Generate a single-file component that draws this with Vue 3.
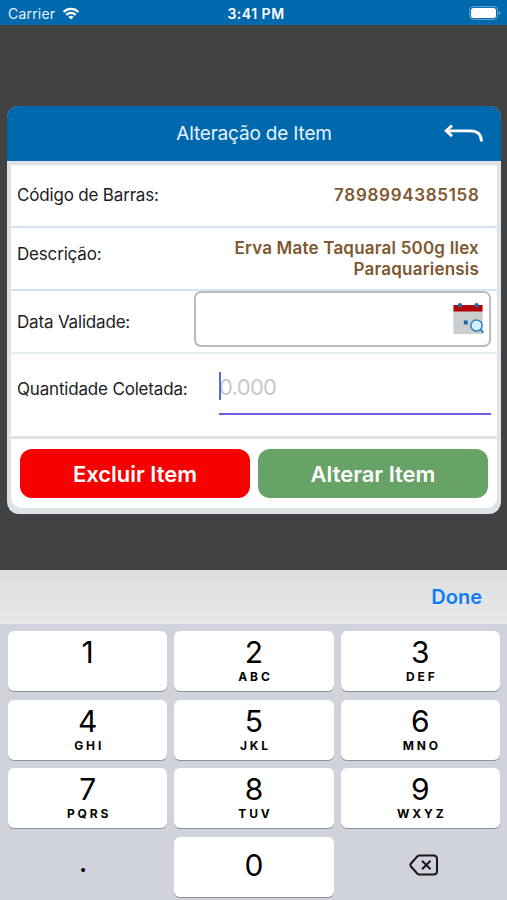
<template>
  <div class="screen">
    <div class="status_bar">
      <div class="status_left">
        <span class="carrier">Carrier</span>
        <svg class="wifi" viewBox="0 0 18 13" width="18" height="13">
          <path d="M1.6 5A10.4 10.4 0 0 1 16.400 5" />
          <path d="M4.300 7.900A6.600 6.600 0 0 1 13.700 7.900" />
          <path class="wifi_dot" d="M9 12.600L6.400 10.100A3.700 3.700 0 0 1 11.600 10.100Z" />
        </svg>
      </div>
      <span class="clock">3:41 PM</span>
      <div class="status_right">
        <svg viewBox="0 0 32 14" width="32" height="14">
          <rect class="battery_border" x="0.600" y="0.600" width="28" height="12.800" rx="4" />
          <rect class="battery_fill" x="2" y="2.100" width="25" height="9.800" rx="2.500" />
          <path class="battery_tip" d="M30 5v4q1.600-.6 1.600-2T30 5z" />
        </svg>
      </div>
    </div>

    <div class="dialog">
      <div class="dialog_header">
        <span class="dialog_title">Alteração de Item</span>
        <svg class="back" viewBox="0 0 40 20" width="40" height="20" @click="back()">
          <path d="M8 1.500L2.200 6.800L8 12.100M2.500 6.800H26Q37.500 6.800 37.500 17.500" />
        </svg>
      </div>
      <div class="dialog_body">
        <div class="row row_code">
          <span class="label">Código de Barras:</span>
          <span class="value code">{{ item.code }}</span>
        </div>
        <div class="row row_desc">
          <span class="label">Descrição:</span>
          <span class="value desc">{{ item.description }}</span>
        </div>
        <div class="row row_date">
          <span class="label">Data Validade:</span>
          <div class="date_field">
            <input v-model="date" class="date_input" type="text" />
            <svg viewBox="0 0 32 33" width="32" height="33">
              <rect x="0.500" y="3" width="29" height="29" fill="#cbcdcf" />
              <rect x="0.500" y="3" width="29" height="6.500" fill="#b4050b" />
              <circle cx="7" cy="3.300" r="2.200" fill="#1c68a8" />
              <circle cx="23.500" cy="3.300" r="2.200" fill="#1c68a8" />
              <rect x="10.800" y="18.500" width="4" height="4" fill="#1c68a8" />
              <path d="M27.500 27.500L30.500 30.800" stroke="#2d84bc" stroke-width="2" />
              <circle cx="23.500" cy="23.500" r="5.600" fill="#d6efff" stroke="#2d84bc" stroke-width="1.500" />
            </svg>
          </div>
        </div>
        <div class="row row_amount">
          <span class="label">Quantidade Coletada:</span>
          <div class="amount_field">
            <input v-model="amount" class="amount_input" type="text" placeholder="0.000" />
            <i class="caret"></i>
          </div>
        </div>
      </div>
      <div class="dialog_footer">
        <button class="btn btn_delete">Excluir Item</button>
        <button class="btn btn_save">Alterar Item</button>
      </div>
    </div>

    <div class="keyboard">
      <div class="toolbar">
        <span class="done">Done</span>
      </div>
      <div class="keys">
        <div
          v-for="key in keys"
          :key="key.num"
          class="key"
          :class="{ plain: key.plain, single: key.single }"
          @click="press(key)"
        >
          <svg v-if="key.num === 'del'" class="del" viewBox="0 0 30 22" width="30" height="22">
            <path d="M10.500 1.500H24.500Q28 1.500 28 5V17Q28 20.500 24.500 20.500H10.500Q9.200 20.500 8.200 19.500L2 12.500Q.7 11 2 9.500L8.200 2.500Q9.200 1.500 10.500 1.500Z" />
            <path d="M13 6.700L21.500 15.300M21.500 6.700L13 15.300" />
          </svg>
          <template v-else>
            <span class="num">{{ key.num }}</span>
            <span v-if="key.letters" class="letters">{{ key.letters }}</span>
          </template>
        </div>
      </div>
    </div>
  </div>
</template>

<script setup>
import {ref} from "vue";

const emit = defineEmits(["back"]);

const item = {
  code: "7898994385158",
  description: "Erva Mate Taquaral 500g Ilex Paraquariensis"
}
const date = ref("")
const amount = ref("")

const keys = [
  {num: "1"},
  {num: "2", letters: "ABC"},
  {num: "3", letters: "DEF"},
  {num: "4", letters: "GHI"},
  {num: "5", letters: "JKL"},
  {num: "6", letters: "MNO"},
  {num: "7", letters: "PQRS"},
  {num: "8", letters: "TUV"},
  {num: "9", letters: "WXYZ"},
  {num: ".", plain: true},
  {num: "0", single: true},
  {num: "del", plain: true}
]

function press(key) {
  if (key.num === "del") {
    amount.value = amount.value.slice(0, -1)
  } else {
    amount.value += key.num
  }
}

function back() {
  emit("back")
}
</script>

<style>
body {
  margin: 0;
  background: #424242;
}
</style>

<style scoped>
.screen {
  display: flex;
  flex-direction: column;
  width: 507px;
  height: 900px;
  overflow: hidden;
  background: #424242;
  font-family: Inter, "Liberation Sans", sans-serif;
}

.status_bar {
  display: grid;
  grid-template-columns: 1fr auto 1fr;
  align-items: center;
  box-sizing: border-box;
  height: 25px;
  padding: 2px 6px 0 8px;
  background: #0069ae;
  color: #fff;
  font-size: 14px;
}

.status_left {
  display: flex;
  align-items: center;
  gap: 7px;
}

.carrier {
  color: #e3f1fb;
  letter-spacing: 0.2px;
}

.wifi {
  fill: none;
  stroke: #fff;
  stroke-width: 2.2;
}

.wifi .wifi_dot {
  fill: #fff;
  stroke: none;
}

.clock {
  margin-left: 3px;
  font-weight: 600;
  letter-spacing: 0.5px;
}

.status_right {
  display: flex;
  justify-content: flex-end;
}

.status_right svg {
  margin-top: -1px;
}

.battery_border {
  fill: none;
  stroke: #6ba8d2;
  stroke-width: 1;
}

.battery_fill {
  fill: #fff;
}

.battery_tip {
  fill: #6ba8d2;
}

.dialog {
  width: 494px;
  height: 408px;
  margin: 81px 0 0 7px;
  border-radius: 12px;
  overflow: hidden;
  background: #dfe2e6;
}

.dialog_header {
  display: grid;
  grid-template-columns: 1fr auto 1fr;
  align-items: center;
  height: 55px;
  background: #0069ae;
}

.dialog_title {
  grid-column: 2;
  color: #e6f3fc;
  font-size: 19px;
  letter-spacing: -0.18px;
}

.back {
  justify-self: end;
  margin: 0 17px 0 0;
  fill: none;
  stroke: #fff;
  stroke-width: 2.8;
}

.dialog_body {
  margin: 4px 4px 0;
  background: #fff;
}

.row {
  display: flex;
  align-items: center;
  justify-content: space-between;
  box-sizing: border-box;
  padding: 0 18px 0 6px;
  border-bottom: 2px solid #d2e5f0;
}

.row_code {
  height: 63px;
}

.row_desc {
  height: 63px;
}

.row_date {
  align-items: flex-start;
  height: 63px;
  padding-right: 6px;
  border-bottom-color: #e3edf4;
}

.row_amount {
  align-items: flex-start;
  height: 82px;
  padding-right: 6px;
  border-bottom: 0;
}

.label {
  color: #1c1c1e;
  font-size: 17px;
  line-height: 21px;
  letter-spacing: -0.18px;
  white-space: nowrap;
}

.row_desc .label {
  margin-bottom: 8px;
}

.row_date .label {
  margin-top: 21px;
}

.row_amount .label {
  margin-top: 25px;
}

.value {
  color: #80582f;
  font-size: 17px;
  font-weight: 600;
  line-height: 21px;
  text-align: right;
}

.code {
  margin-right: -0.6px;
  letter-spacing: 0.7px;
}

.desc {
  width: 260px;
  letter-spacing: 0.2px;
}

.date_field {
  display: flex;
  align-items: center;
  box-sizing: border-box;
  width: 297px;
  height: 56px;
  padding: 0 4px 1px 8px;
  border: 2px solid #b9bbbd;
  border-radius: 7px;
}

.date_input {
  flex: 1;
  min-width: 0;
  border: 0;
  outline: 0;
  background: transparent;
  font: inherit;
}

.amount_field {
  position: relative;
  width: 272px;
  height: 42px;
  margin-top: 17px;
  border-bottom: 2px solid #6760e0;
}

.amount_input {
  width: 100%;
  height: 32px;
  padding: 0;
  border: 0;
  outline: 0;
  background: transparent;
  font-family: inherit;
  font-size: 22px;
  letter-spacing: -0.7px;
}

.amount_input::placeholder {
  color: #c8c8ca;
}

.caret {
  position: absolute;
  top: 1px;
  left: 0;
  width: 2px;
  height: 28px;
  background: #4a6ee0;
}

.dialog_footer {
  display: flex;
  gap: 8px;
  box-sizing: border-box;
  height: 69px;
  margin: 3px 4px 0;
  padding: 10px 9px 0;
  border-radius: 0 0 11px 11px;
  background: #fff;
}

.btn {
  flex: 1;
  height: 49px;
  padding: 0;
  border: 0;
  border-radius: 12px;
  color: #fff;
  font-family: inherit;
  font-size: 22px;
  font-weight: 600;
}

.btn_delete {
  background: #f60000;
}

.btn_save {
  background: #67a267;
}

.keyboard {
  height: 330px;
  margin-top: auto;
  background: #d0d3dc;
}

.toolbar {
  display: flex;
  align-items: center;
  justify-content: flex-end;
  box-sizing: border-box;
  height: 54px;
  padding-right: 25px;
  background: linear-gradient(#dcdddd, #e7e9ea);
}

.done {
  color: #0f7bf7;
  font-size: 20px;
  font-weight: 600;
}

.keys {
  display: grid;
  grid-template-columns: repeat(3, 1fr);
  grid-auto-rows: 60px;
  gap: 8.600px 7px;
  padding: 7px 7px 0 8px;
}

.key {
  display: flex;
  flex-direction: column;
  align-items: center;
  border-radius: 6px;
  background: #fff;
  box-shadow: 0 1px 0 #8f9196;
  color: #000;
}

.num {
  margin-top: 3px;
  font-size: 30px;
  line-height: 36px;
}

.letters {
  margin-right: -3px;
  font-size: 12px;
  font-weight: 700;
  line-height: 13px;
  letter-spacing: 2.9px;
}

.single {
  justify-content: center;
}

.single .num {
  margin: 0 0 4px;
}

.plain {
  justify-content: center;
  background: transparent;
  box-shadow: none;
}

.plain .num {
  margin: 0 9px 11px 0;
}

.del {
  margin: 0 0 3px 7px;
  fill: none;
  stroke: #17181a;
  stroke-width: 2;
}
</style>
